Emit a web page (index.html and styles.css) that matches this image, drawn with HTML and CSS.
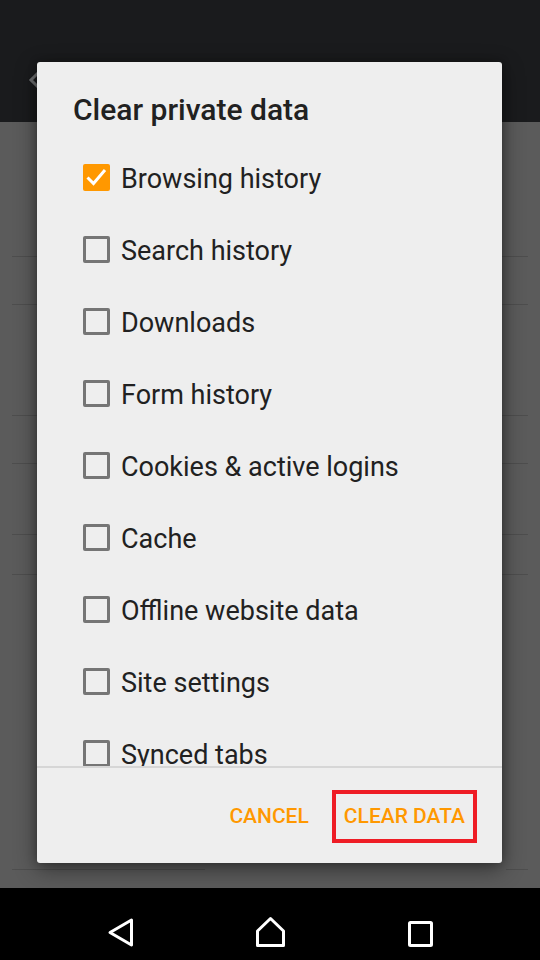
FILE: index.html
```html
<!DOCTYPE html>
<html lang="en">
<head>
<meta charset="utf-8">
<title>Clear private data</title>
<link rel="stylesheet" href="styles.css">
</head>
<body>
<div class="screen">
  <header class="appbar">
    <svg class="appbar-back" width="16" height="20" viewBox="0 0 16 20"><path d="M10 3 L3 10 L10 17" fill="none" stroke="#6e6f71" stroke-width="3"/></svg>
  </header>
  <main class="content">
    <div class="bg-line l1"></div>
    <div class="bg-line l2"></div>
    <div class="bg-line l3"></div>
    <div class="bg-line l4"></div>
    <div class="bg-line l5"></div>
    <div class="bg-line l6"></div>
    <div class="bg-split">
      <div class="bg-seg seg-a"></div>
      <div class="bg-seg seg-b"></div>
    </div>
  </main>
  <nav class="navbar">
    <div class="nav-item">
      <svg width="32" height="32" viewBox="0 0 32 32"><path d="M27.5 4 L6 16.5 L27.5 29 Z" fill="none" stroke="#fff" stroke-width="3" stroke-linejoin="round"/></svg>
    </div>
    <div class="nav-item">
      <svg width="32" height="32" viewBox="0 0 32 32"><path d="M16.5 2.5 L3.5 15 L3.5 29.5 L29.5 29.5 L29.5 15 Z" fill="none" stroke="#fff" stroke-width="3" stroke-linejoin="round"/></svg>
    </div>
    <div class="nav-item">
      <svg width="32" height="32" viewBox="0 0 32 32"><rect x="5.5" y="6.5" width="22" height="23" rx="1" fill="none" stroke="#fff" stroke-width="3"/></svg>
    </div>
  </nav>

  <div class="dialog">
    <h1 class="dialog-title">Clear private data</h1>
    <div class="dialog-list">
      <div class="item">
        <span class="box checked"><svg width="27" height="27" viewBox="0 0 27 27"><path d="M4.5 13.5 L10.5 19.5 L22 6" fill="none" stroke="#fff" stroke-width="3"/></svg></span>
        <span class="label">Browsing history</span>
      </div>
      <div class="item"><span class="box"></span><span class="label">Search history</span></div>
      <div class="item"><span class="box"></span><span class="label">Downloads</span></div>
      <div class="item"><span class="box"></span><span class="label">Form history</span></div>
      <div class="item"><span class="box"></span><span class="label">Cookies &amp; active logins</span></div>
      <div class="item"><span class="box"></span><span class="label">Cache</span></div>
      <div class="item"><span class="box"></span><span class="label">Offline website data</span></div>
      <div class="item"><span class="box"></span><span class="label">Site settings</span></div>
      <div class="item"><span class="box"></span><span class="label">Synced tabs</span></div>
    </div>
    <div class="dialog-actions">
      <span class="btn">CANCEL</span>
      <span class="btn btn-primary">CLEAR DATA</span>
    </div>
  </div>
</div>
</body>
</html>
```
FILE: styles.css
```css
* { box-sizing: border-box; }
html, body { margin: 0; padding: 0; }
body {
  width: 540px;
  height: 960px;
  overflow: hidden;
  font-family: Roboto, "Noto Sans", "Liberation Sans", sans-serif;
  background: #000;
}
.screen {
  position: relative;
  width: 540px;
  height: 960px;
  display: flex;
  flex-direction: column;
}
.appbar {
  height: 122px;
  background: #1a1b1d;
  padding: 70px 0 0 28px;
}
.appbar-back { display: block; }
.content {
  height: 766px;
  background: #5b5b5b;
  padding: 0 12px;
  display: flex;
  flex-direction: column;
}
.bg-line { height: 1px; background: #4e4e4e; }
.l1 { margin-top: 134px; }
.l2 { margin-top: 47px; }
.l3 { margin-top: 110px; }
.l4 { margin-top: 47px; }
.l5 { margin-top: 70px; }
.l6 { margin-top: 39px; }
.bg-split {
  margin-top: 294px;
  display: flex;
  justify-content: space-between;
}
.bg-seg { height: 1px; background: #4e4e4e; }
.seg-a { width: 193px; }
.seg-b { width: 22px; }
.navbar {
  height: 72px;
  background: #000;
  display: flex;
  justify-content: center;
  align-items: flex-start;
  padding-top: 28px;
}
.nav-item {
  width: 150px;
  display: flex;
  justify-content: center;
}
.nav-item svg { display: block; }

.dialog {
  position: absolute;
  left: 37px;
  top: 62px;
  width: 465px;
  height: 801px;
  background: #eeeeee;
  border-radius: 3px;
  box-shadow: 0 6px 22px rgba(0,0,0,0.45), 0 0 8px rgba(0,0,0,0.25);
  display: flex;
  flex-direction: column;
}
.dialog-title {
  margin: 0;
  padding: 32px 36px 0;
  font-size: 30px;
  line-height: 32px;
  font-weight: 500;
  color: #212121;
}
.dialog-list {
  flex: 1;
  overflow: hidden;
  padding: 17px 0 0 46px;
}
.item {
  height: 72px;
  display: flex;
  align-items: center;
  gap: 11px;
}
.box {
  width: 27px;
  height: 27px;
  flex: none;
  border: 3px solid #757575;
  border-radius: 2px;
  margin-top: -4px;
}
.box.checked {
  border: none;
  background: #ff9800;
}
.box svg { display: block; }
.label {
  font-size: 27px;
  line-height: 32px;
  color: #212121;
}
.dialog-actions {
  border-top: 2px solid #d6d6d6;
  height: 97px;
  display: flex;
  justify-content: flex-end;
  align-items: flex-start;
  padding: 22px 25px 0 0;
  gap: 23px;
}
.btn {
  font-size: 21px;
  font-weight: 500;
  color: #ff9800;
  height: 53px;
  line-height: 53px;
}
.btn-primary {
  border: 4px solid #ee1c25;
  line-height: 45px;
  padding: 0 8px;
}
```
